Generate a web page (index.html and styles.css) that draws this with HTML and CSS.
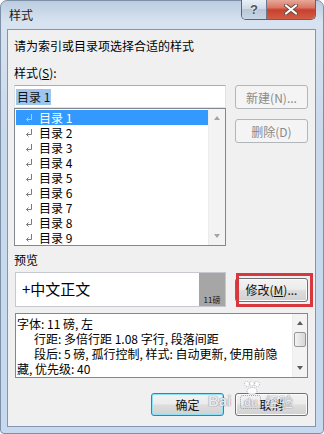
FILE: index.html
```html
<!DOCTYPE html>
<html lang="zh-CN">
<head>
  <meta charset="UTF-8">
  <meta name="viewport" content="width=device-width, initial-scale=1.0">
  <title>样式</title>
  <link rel="stylesheet" href="styles.css">
</head>
<body>
  <div class="window">
    <div class="titlebar">
      <span class="title">样式</span>
      <div class="caption-buttons">
        <div class="cap-help">?</div>
        <div class="cap-close">
          <svg width="14" height="11" viewBox="0 0 14 11">
            <path d="M2 1.5L12 9.5M12 1.5L2 9.5" stroke="#6b4a45" stroke-width="4" stroke-linecap="round"/>
            <path d="M2 1.5L12 9.5M12 1.5L2 9.5" stroke="#fff" stroke-width="2.2" stroke-linecap="round"/>
          </svg>
        </div>
      </div>
    </div>

    <div class="client">
      <p class="intro">请为索引或目录项选择合适的样式</p>

      <label class="field-label">样式(<u>S</u>):</label>
      <div class="style-row">
        <div class="style-picker">
          <div class="style-input"><span class="input-sel">目录 1</span></div>
          <div class="listbox">
            <ul class="items">
              <li class="selected"><svg class="para" width="8" height="8" viewBox="0 0 8 8"><path d="M6.5 0V5.5H1.5M3.5 3.5L1.5 5.5L3.5 7.5" fill="none" stroke="currentColor"/></svg>目录 1</li>
              <li><svg class="para" width="8" height="8" viewBox="0 0 8 8"><path d="M6.5 0V5.5H1.5M3.5 3.5L1.5 5.5L3.5 7.5" fill="none" stroke="currentColor"/></svg>目录 2</li>
              <li><svg class="para" width="8" height="8" viewBox="0 0 8 8"><path d="M6.5 0V5.5H1.5M3.5 3.5L1.5 5.5L3.5 7.5" fill="none" stroke="currentColor"/></svg>目录 3</li>
              <li><svg class="para" width="8" height="8" viewBox="0 0 8 8"><path d="M6.5 0V5.5H1.5M3.5 3.5L1.5 5.5L3.5 7.5" fill="none" stroke="currentColor"/></svg>目录 4</li>
              <li><svg class="para" width="8" height="8" viewBox="0 0 8 8"><path d="M6.5 0V5.5H1.5M3.5 3.5L1.5 5.5L3.5 7.5" fill="none" stroke="currentColor"/></svg>目录 5</li>
              <li><svg class="para" width="8" height="8" viewBox="0 0 8 8"><path d="M6.5 0V5.5H1.5M3.5 3.5L1.5 5.5L3.5 7.5" fill="none" stroke="currentColor"/></svg>目录 6</li>
              <li><svg class="para" width="8" height="8" viewBox="0 0 8 8"><path d="M6.5 0V5.5H1.5M3.5 3.5L1.5 5.5L3.5 7.5" fill="none" stroke="currentColor"/></svg>目录 7</li>
              <li><svg class="para" width="8" height="8" viewBox="0 0 8 8"><path d="M6.5 0V5.5H1.5M3.5 3.5L1.5 5.5L3.5 7.5" fill="none" stroke="currentColor"/></svg>目录 8</li>
              <li><svg class="para" width="8" height="8" viewBox="0 0 8 8"><path d="M6.5 0V5.5H1.5M3.5 3.5L1.5 5.5L3.5 7.5" fill="none" stroke="currentColor"/></svg>目录 9</li>
            </ul>
            <div class="scrollbar list-scroll">
              <span class="arrow up"></span>
              <span class="arrow down"></span>
            </div>
          </div>
        </div>
        <div class="side-buttons">
          <button class="btn" disabled>新建(N)...</button>
          <button class="btn" disabled>删除(D)</button>
        </div>
      </div>

      <label class="field-label preview-label">预览</label>
      <div class="preview-row">
        <div class="preview">
          <span class="preview-text">+中文正文</span>
          <div class="preview-size"><span>11磅</span></div>
        </div>
        <div class="modify-wrap">
          <button class="btn">修改(<u>M</u>)...</button>
          <span class="highlight"></span>
        </div>
      </div>

      <div class="desc">
        <div class="desc-text">
          <div>字体: 11 磅, 左</div>
          <div class="indent">行距: 多倍行距 1.08 字行, 段落间距</div>
          <div class="indent">段后: 5 磅, 孤行控制, 样式: 自动更新, 使用前隐</div>
          <div>藏, 优先级: 40</div>
        </div>
        <div class="scrollbar desc-scroll">
          <span class="arrow up dark"></span>
          <span class="thumb"></span>
          <span class="spacer"></span>
          <span class="arrow down dark"></span>
        </div>
      </div>

      <div class="footer">
        <button class="btn btn-default">确定</button>
        <button class="btn">取消</button>
      </div>
    </div>

    <div class="watermark">
      <span class="wm-bai">Bai</span>
      <span class="wm-du">du</span>
      <span class="wm-jy">经验</span>
      <svg class="wm-paw" width="22" height="14" viewBox="0 0 22 14">
        <g fill="rgba(255,255,255,0.85)" stroke="rgba(140,140,155,0.8)" stroke-width="0.8" stroke-dasharray="1 1">
          <ellipse cx="6" cy="3" rx="2.4" ry="2.8"/>
          <ellipse cx="11" cy="2.5" rx="2.4" ry="2.4"/>
          <ellipse cx="16" cy="3" rx="2.4" ry="2.8"/>
          <ellipse cx="11" cy="10" rx="5" ry="3.5"/>
        </g>
      </svg>
    </div>
  </div>
</body>
</html>
```

FILE: styles.css
```css
* {
  box-sizing: border-box;
  margin: 0;
  padding: 0;
}
body {
  width: 324px;
  height: 434px;
  overflow: hidden;
  font-family: "Noto Sans CJK SC", "Liberation Sans", sans-serif;
  font-size: 12px;
  color: #000;
  background: #fff;
}
.window {
  position: relative;
  width: 324px;
  height: 434px;
  display: flex;
  flex-direction: column;
  background: linear-gradient(180deg, #bccde0 0%, #d7e3f0 5%, #c9d9ec 30%, #c6d9ef 100%);
  border: 1px solid #7d90a8;
  border-radius: 7px 7px 4px 4px;
}

/* title bar */
.titlebar {
  height: 28px;
  display: flex;
  align-items: flex-start;
}
.title {
  padding: 6px 0 0 8px;
  line-height: 16px;
  color: #1b1b1b;
}
.caption-buttons {
  display: flex;
  margin: -1px 7px 0 auto;
  height: 20px;
  border: 1px solid #55657a;
  border-top: none;
  border-radius: 0 0 5px 5px;
  overflow: hidden;
}
.cap-help {
  width: 25px;
  font: bold 13px/19px "Liberation Sans", sans-serif;
  text-align: center;
  color: #4b5563;
  text-shadow: 0 0 2px #fff;
  background: linear-gradient(180deg, #e9eff6 0%, #cfdae6 45%, #b8c7d8 50%, #c9d5e3 100%);
  border-right: 1px solid #6b7a8e;
}
.cap-close {
  width: 48px;
  display: flex;
  align-items: center;
  justify-content: center;
  background: linear-gradient(180deg, #e8a898 0%, #d87764 40%, #c8412d 52%, #d25c45 100%);
}

/* client area */
.client {
  position: relative;
  flex: 1;
  margin: 0 7px 6px 6px;
  background: #f0f0f0;
  border: 1px solid #8396ad;
  padding: 8px 7px 0 6px;
}
.intro {
  line-height: 16px;
}
.field-label {
  display: block;
  margin-top: 11px;
  line-height: 16px;
}
.style-row {
  display: flex;
  gap: 9px;
  margin-top: 4px;
}
.style-picker {
  width: 212px;
}
.style-input {
  height: 23px;
  background: #fff;
  border: 1px solid #dfe3e8;
  border-top-color: #abadb3;
  padding: 2px 0 0 1px;
}
.input-sel {
  display: inline-block;
  line-height: 16px;
  padding: 0 1px;
  background: #9ec5ee;
  color: #111;
}
.listbox {
  display: flex;
  height: 138px;
  background: #fff;
  border: 1px solid #828790;
}
.items {
  flex: 1;
  list-style: none;
  padding: 1px 0 0 1px;
}
.items li {
  display: flex;
  align-items: center;
  height: 15px;
  line-height: 15px;
  padding-left: 9px;
}
.items li.selected {
  background: #3399ff;
  color: #fff;
}
.para {
  margin-right: 6px;
  color: #7a7a7a;
}
.selected .para {
  color: #a9cff7;
}
.scrollbar {
  display: flex;
  flex-direction: column;
  align-items: center;
  justify-content: space-between;
  background: #f3f3f3;
  border-left: 1px solid #ececec;
}
.list-scroll {
  width: 17px;
  padding: 7px 0 7px;
}
.arrow {
  width: 0;
  height: 0;
  border-left: 3.5px solid transparent;
  border-right: 3.5px solid transparent;
}
.arrow.up {
  border-bottom: 4px solid #a4a4a4;
}
.arrow.down {
  border-top: 4px solid #a4a4a4;
}
.arrow.up.dark {
  border-bottom-color: #5b5b5b;
}
.arrow.down.dark {
  border-top-color: #5b5b5b;
}
.side-buttons {
  display: flex;
  flex-direction: column;
  gap: 10px;
  width: 73px;
}

/* buttons */
.btn {
  width: 73px;
  height: 24px;
  font-family: "Noto Sans CJK SC", "Liberation Sans", sans-serif;
  font-size: 12px;
  color: #111;
  border: 1px solid #707070;
  border-radius: 3px;
  background: linear-gradient(180deg, #f3f3f3 0%, #ebebeb 48%, #dddddd 52%, #d1d1d1 100%);
  box-shadow: inset 0 0 0 1px #fbfbfb;
}
.btn:disabled {
  color: #8a8a8a;
  border-color: #b3b6b9;
  background: #f4f4f4;
  box-shadow: none;
}
.btn-default {
  border-color: #3c7fb1;
  box-shadow: inset 0 0 0 1px #8ee2f7;
}
.btn u {
  text-underline-offset: 1px;
}

/* preview */
.preview-label {
  margin-top: 6px;
}
.preview-row {
  display: flex;
  align-items: center;
  gap: 9px;
  margin-top: 4px;
}
.preview {
  display: flex;
  width: 211px;
  height: 35px;
  margin-left: 1px;
  background: #fff;
  border: 1px solid #c5c9cf;
}
.preview-text {
  flex: 1;
  padding-left: 6px;
  font-size: 15px;
  line-height: 32px;
}
.preview-size {
  width: 26px;
  background: #a6a6a6;
  display: flex;
  align-items: flex-end;
  justify-content: center;
  padding-bottom: 2px;
}
.preview-size span {
  font-size: 8px;
  line-height: 9px;
  color: #111;
}
.modify-wrap {
  position: relative;
  width: 73px;
}
.modify-wrap .btn {
  display: block;
}
.highlight {
  position: absolute;
  left: 1px;
  top: -5px;
  width: 77px;
  height: 34px;
  border: 3px solid #d8383d;
}

/* description */
.desc {
  display: flex;
  height: 65px;
  margin: 6px 0 0 1px;
  background: #fff;
  border: 1px solid #828790;
}
.desc-text {
  flex: 1;
  padding: 2px 0 0 1px;
  line-height: 15px;
  white-space: nowrap;
}
.desc-text .indent {
  padding-left: 17px;
}
.desc-scroll {
  width: 15px;
  padding: 7px 0 7px;
}
.thumb {
  width: 12px;
  height: 15px;
  margin-top: 7px;
  border: 1px solid #979797;
  border-radius: 2px;
  background: linear-gradient(90deg, #f3f3f3 0%, #e4e4e4 50%, #d6d6d6 100%);
}
.spacer {
  flex: 1;
}

/* footer */
.footer {
  display: flex;
  justify-content: flex-end;
  gap: 11px;
  margin-top: 15px;
}
.footer .btn {
  height: 23px;
}

/* baidu watermark */
.watermark {
  position: absolute;
  left: 207px;
  top: 379px;
  width: 90px;
  height: 32px;
  pointer-events: none;
}
.watermark span {
  position: absolute;
  font-family: "Liberation Sans", sans-serif;
  color: rgba(255, 255, 255, 0.85);
  text-shadow: 0 0 1px rgba(110, 110, 130, 0.9), 0 0 1px rgba(110, 110, 130, 0.6);
}
.wm-bai {
  left: 0;
  top: 13px;
  font-size: 15px;
  font-weight: bold;
  line-height: 16px;
}
.wm-du {
  left: 32px;
  top: 15px;
  font-size: 11px;
  font-weight: bold;
  line-height: 12px;
  padding: 0 3px;
  border: 1px dotted rgba(140, 140, 155, 0.8);
  border-radius: 3px;
}
.wm-jy {
  left: 57px;
  top: 13px;
  font-size: 14px;
  line-height: 16px;
  font-family: "Noto Sans CJK SC", sans-serif !important;
}
.wm-paw {
  position: absolute;
  left: 33px;
  top: 1px;
}
```
